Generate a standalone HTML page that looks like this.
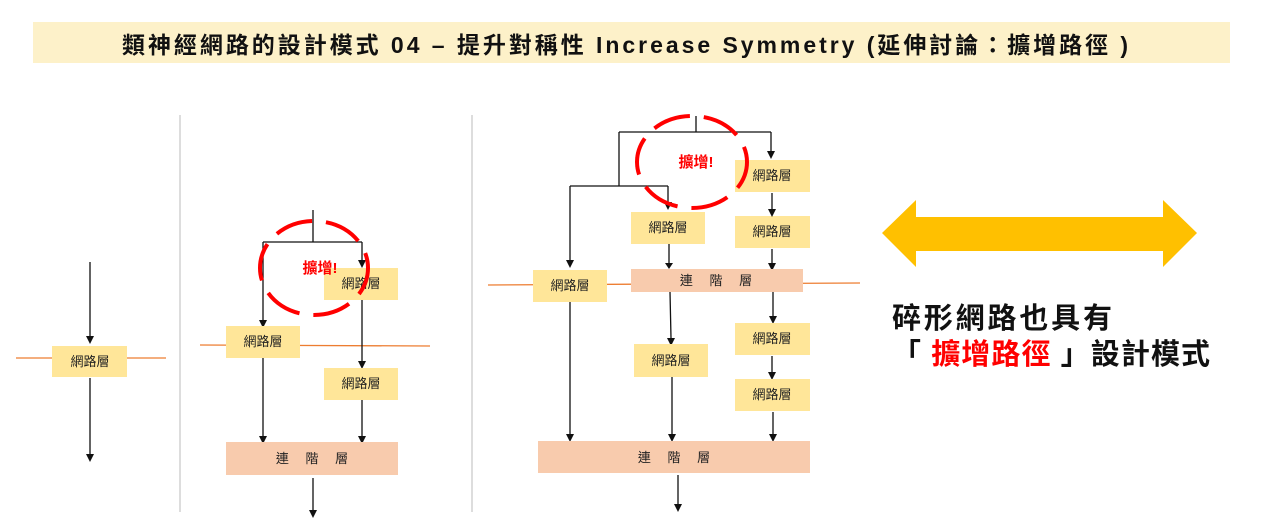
<!DOCTYPE html>
<html><head><meta charset="utf-8"><style>
html,body{margin:0;padding:0;background:#fff;width:1280px;height:531px;overflow:hidden}
svg{display:block}
text{font-family:"Liberation Sans","Noto Sans CJK TC",sans-serif}
</style></head><body>
<svg width="1280" height="531" viewBox="0 0 1280 531" xmlns="http://www.w3.org/2000/svg">
<style>
.l{stroke:#111;stroke-width:1.3;fill:none}
.b{fill:#ffe699}
.c{fill:#f8cbad}
.o{stroke:#ed7d31;stroke-width:1.3}
.t{font-size:13px;fill:#222;text-anchor:middle}
</style>
<rect x="33" y="22" width="1197" height="41" fill="#fdf1c9"/>
<text x="122" y="53" font-size="23" font-weight="bold" fill="#111" textLength="1006" lengthAdjust="spacing">類神經網路的設計模式 04 – 提升對稱性 Increase Symmetry (延伸討論：擴增路徑 )</text>

<line x1="180" y1="115" x2="180" y2="512" stroke="#bbb" stroke-width="1"/>
<line x1="472" y1="115" x2="472" y2="512" stroke="#bbb" stroke-width="1"/>

<!-- panel 1 -->
<line class="o" x1="16" y1="358" x2="166" y2="358"/>
<line class="l" x1="90" y1="262" x2="90" y2="338"/>
<path d="M86,336h8l-4,8z" fill="#111"/>
<rect class="b" x="52" y="346" width="75" height="31"/>
<text class="t" x="90" y="366">網路層</text>
<line class="l" x1="90" y1="378" x2="90" y2="456"/>
<path d="M86,454h8l-4,8z" fill="#111"/>

<!-- panel 2 -->
<line class="o" x1="200" y1="345" x2="430" y2="346"/>
<path class="l" d="M313,210V242M263,242H362M263,242V320M362,242V262"/>
<path d="M259,320h8l-4,8z M358,260h8l-4,8z" fill="#111"/>
<rect class="b" x="324" y="268" width="74" height="32"/>
<text class="t" x="361" y="288">網路層</text>
<rect class="b" x="226" y="326" width="74" height="32"/>
<text class="t" x="263" y="346">網路層</text>
<path class="l" d="M362,300V362M362,400V436M263,358V436"/>
<path d="M358,361h8l-4,8z M358,436h8l-4,8z M259,436h8l-4,8z" fill="#111"/>
<rect class="b" x="324" y="368" width="74" height="32"/>
<text class="t" x="361" y="388">網路層</text>
<rect class="c" x="226" y="442" width="172" height="33"/>
<text class="t" x="312" y="463">連　 階　 層</text>
<path class="l" d="M313,478V511"/>
<path d="M309,510h8l-4,8z" fill="#111"/>
<ellipse cx="314" cy="268" rx="54" ry="47" fill="none" stroke="#f00" stroke-width="4" stroke-dasharray="38,14" stroke-dashoffset="10"/>
<text x="320" y="273" font-size="15" font-weight="bold" fill="#f00" text-anchor="middle">擴增!</text>

<!-- panel 3 -->
<line class="o" x1="488" y1="285" x2="860" y2="283"/>
<path class="l" d="M696,116V132M619,132H771M771,132V152M619,132V186M570,186H668M570,186V260M668,186V202"/>
<path d="M767,151h8l-4,8z M566,260h8l-4,8z M664,202h8l-4,8z" fill="#111"/>
<rect class="b" x="735" y="160" width="75" height="32"/>
<text class="t" x="772" y="180">網路層</text>
<rect class="b" x="631" y="212" width="74" height="32"/>
<text class="t" x="668" y="232">網路層</text>
<rect class="b" x="735" y="216" width="75" height="32"/>
<text class="t" x="772" y="236">網路層</text>
<path class="l" d="M772,193V210M772,249V264M669,244V263"/>
<path d="M768,209h8l-4,8z M768,263h8l-4,8z M665,263h8l-4,6z" fill="#111"/>
<rect class="b" x="533" y="270" width="74" height="32"/>
<text class="t" x="570" y="290">網路層</text>
<rect class="c" x="631" y="269" width="172" height="23"/>
<text class="t" x="716" y="285">連　 階　 層</text>
<path class="l" d="M670,292L671,338M773,292V316M772,356V373M570,302V434M672,377V434M773,412V434"/>
<path d="M667,338h8l-4,8z M769,316h8l-4,8z M768,372h8l-4,8z M566,434h8l-4,8z M668,434h8l-4,8z M769,434h8l-4,8z" fill="#111"/>
<rect class="b" x="634" y="344" width="74" height="33"/>
<text class="t" x="671" y="365">網路層</text>
<rect class="b" x="735" y="323" width="75" height="32"/>
<text class="t" x="772" y="343">網路層</text>
<rect class="b" x="735" y="379" width="75" height="32"/>
<text class="t" x="772" y="399">網路層</text>
<rect class="c" x="538" y="441" width="272" height="32"/>
<text class="t" x="674" y="462">連　 階　 層</text>
<path class="l" d="M678,475V505"/>
<path d="M674,504h8l-4,8z" fill="#111"/>
<ellipse cx="692" cy="162" rx="55" ry="46" fill="none" stroke="#f00" stroke-width="4" stroke-dasharray="38,14" stroke-dashoffset="10"/>
<text x="696" y="167" font-size="15" font-weight="bold" fill="#f00" text-anchor="middle">擴增!</text>

<!-- big arrow -->
<path d="M882,233 L916,200 L916,217 L1163,217 L1163,200 L1197,233 L1163,267 L1163,251 L916,251 L916,267 Z" fill="#ffc000"/>
<text x="892" y="328" font-size="29" font-weight="bold" fill="#111" textLength="220" lengthAdjust="spacing">碎形網路也具有</text>
<text x="892" y="364" font-size="29" font-weight="bold" fill="#111" textLength="318" lengthAdjust="spacing">「 <tspan fill="#f00">擴增路徑</tspan> 」設計模式</text>
</svg>
</body></html>
